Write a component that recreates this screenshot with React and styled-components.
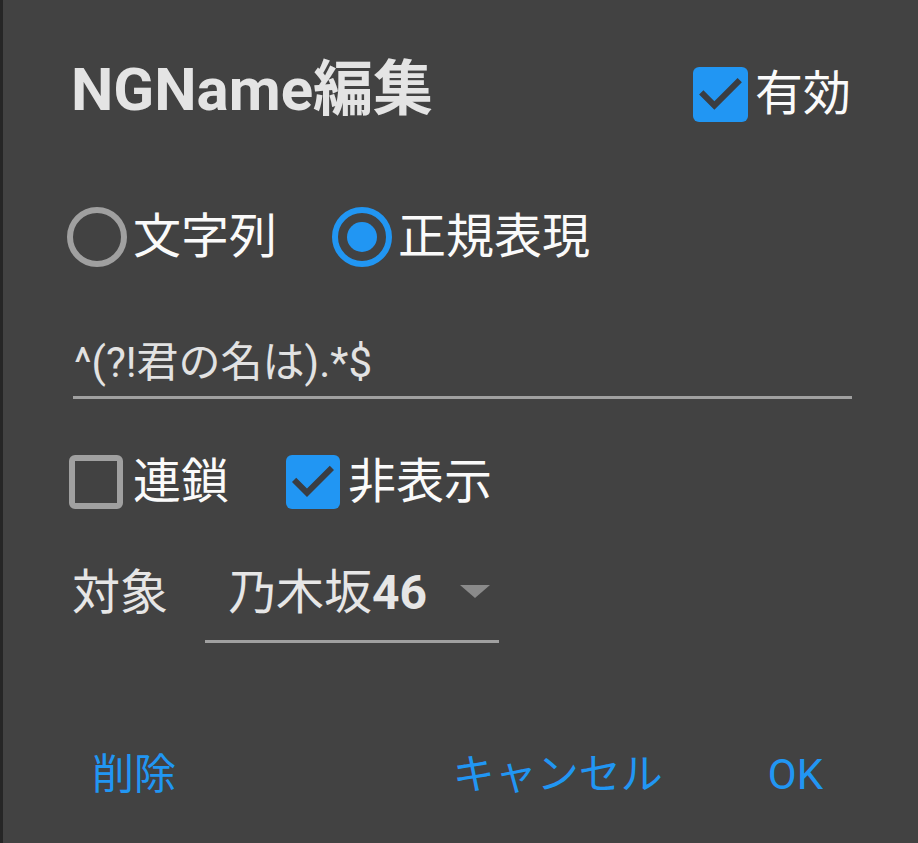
import React from "react";
import styled, { createGlobalStyle } from "styled-components";

const Global = createGlobalStyle`
  html, body { margin: 0; padding: 0; background: #424242; }
  body { font-family: Roboto, "Noto Sans CJK JP", sans-serif; }
`;

const BLUE = "#2196f3";
const GREY = "#a0a0a0";
const BG = "#424242";

const Dialog = styled.div`
  box-sizing: border-box;
  width: 918px;
  height: 843px;
  background: ${BG};
  border-left: 3px solid #262626;
  padding: 42px 67px 0 64px;
  display: flex;
  flex-direction: column;
  font-family: Roboto, "Noto Sans CJK JP", sans-serif;
`;

const Header = styled.div`
  height: 100px;
  display: flex;
  align-items: center;
  justify-content: space-between;
`;

const Title = styled.h1`
  margin: 0 0 4px 4px;
  font-size: 60px;
  line-height: 70px;
  font-weight: 700;
  color: #e4e4e4;
`;

const Check = styled.label`
  display: flex;
  align-items: center;
  gap: ${(p) => p.$gap || 8}px;
  margin-left: ${(p) => p.$ml || 0}px;
  margin-top: ${(p) => p.$mt || 0}px;
`;

const Label = styled.span`
  font-size: 48px;
  line-height: 60px;
  color: #fafafa;
`;

const RadioRow = styled.div`
  margin-top: 65px;
  height: 60px;
  display: flex;
  align-items: center;
`;

const Radio = styled.label`
  display: flex;
  align-items: center;
  gap: 6px;
  margin-left: ${(p) => p.$ml || 0}px;
`;

const Input = styled.div`
  margin: 66px 0 0 6px;
  width: 779px;
  height: 66px;
  box-sizing: border-box;
  border-bottom: 3px solid ${GREY};
  padding-left: 1px;
  font-size: 42px;
  line-height: 60px;
  color: #e2e2e2;
  white-space: nowrap;
`;

const CheckRow = styled.div`
  margin-top: 55px;
  height: 56px;
  display: flex;
  align-items: center;
`;

const TargetRow = styled.div`
  margin-top: 38px;
  display: flex;
  align-items: flex-start;
`;

const TargetLabel = styled.span`
  margin-left: 5px;
  font-size: 48px;
  line-height: 90px;
  color: #e6e6e6;
`;

const Spinner = styled.div`
  margin-left: 37px;
  width: 294px;
  height: 95px;
  box-sizing: border-box;
  border-bottom: 3px solid ${GREY};
  padding: 0 9px 0 23px;
  display: flex;
  align-items: flex-start;
  justify-content: space-between;
`;

const SpinnerText = styled.span`
  font-size: 48px;
  line-height: 90px;
  color: #e6e6e6;
  white-space: nowrap;
`;

const Num = styled.span`
  font-weight: 700;
`;

const Arrow = styled.span`
  margin-top: 37px;
  width: 0;
  height: 0;
  border-left: 15px solid transparent;
  border-right: 15px solid transparent;
  border-top: 13px solid #8a8a8a;
`;

const Buttons = styled.div`
  margin-top: 88px;
  height: 88px;
  display: flex;
  align-items: center;
`;

const Button = styled.button`
  background: none;
  border: 0;
  padding: 0;
  font-family: Roboto, "Noto Sans CJK JP", sans-serif;
  font-size: 42px;
  line-height: 60px;
  color: ${BLUE};
  margin-left: ${(p) => p.$ml || 0}px;
  margin-right: ${(p) => p.$mr || 0}px;
  ${(p) => (p.$push ? "margin-left: auto;" : "")}
`;

const CheckBoxIcon = ({ checked, size = 54 }) => (
  <svg width={size} height={size} viewBox="3 3 18 18">
    {checked ? (
      <>
        <rect x="3" y="3" width="18" height="18" rx="2" fill={BLUE} />
        <path d="M10 17l-5-5 1.41-1.41L10 14.17l7.59-7.59L19 8l-9 9z" fill="#3a3d42" />
      </>
    ) : (
      <rect x="4" y="4" width="16" height="16" rx="1" fill="none" stroke={GREY} strokeWidth="2" />
    )}
  </svg>
);

const RadioIcon = ({ checked }) => (
  <svg width="60" height="60" viewBox="2 2 20 20">
    <circle cx="12" cy="12" r="9" fill="none" stroke={checked ? BLUE : GREY} strokeWidth="2" />
    {checked && <circle cx="12" cy="12" r="5" fill={BLUE} />}
  </svg>
);

export default function App() {
  return (
    <>
      <Global />
      <Dialog>
        <Header>
          <Title>NGName編集</Title>
          <Check $gap={7} $mt={4}>
            <CheckBoxIcon checked size={55} />
            <Label>有効</Label>
          </Check>
        </Header>
        <RadioRow>
          <Radio>
            <RadioIcon />
            <Label>文字列</Label>
          </Radio>
          <Radio $ml={55}>
            <RadioIcon checked />
            <Label>正規表現</Label>
          </Radio>
        </RadioRow>
        <Input>^(?!君の名は).*$</Input>
        <CheckRow>
          <Check $ml={2} $gap={10}>
            <CheckBoxIcon />
            <Label>連鎖</Label>
          </Check>
          <Check $ml={57}>
            <CheckBoxIcon checked />
            <Label>非表示</Label>
          </Check>
        </CheckRow>
        <TargetRow>
          <TargetLabel>対象</TargetLabel>
          <Spinner>
            <SpinnerText>
              乃木坂<Num>46</Num>
            </SpinnerText>
            <Arrow />
          </Spinner>
        </TargetRow>
        <Buttons>
          <Button $ml={25}>削除</Button>
          <Button $push>キャンセル</Button>
          <Button $ml={105} $mr={28}>OK</Button>
        </Buttons>
      </Dialog>
    </>
  );
}
